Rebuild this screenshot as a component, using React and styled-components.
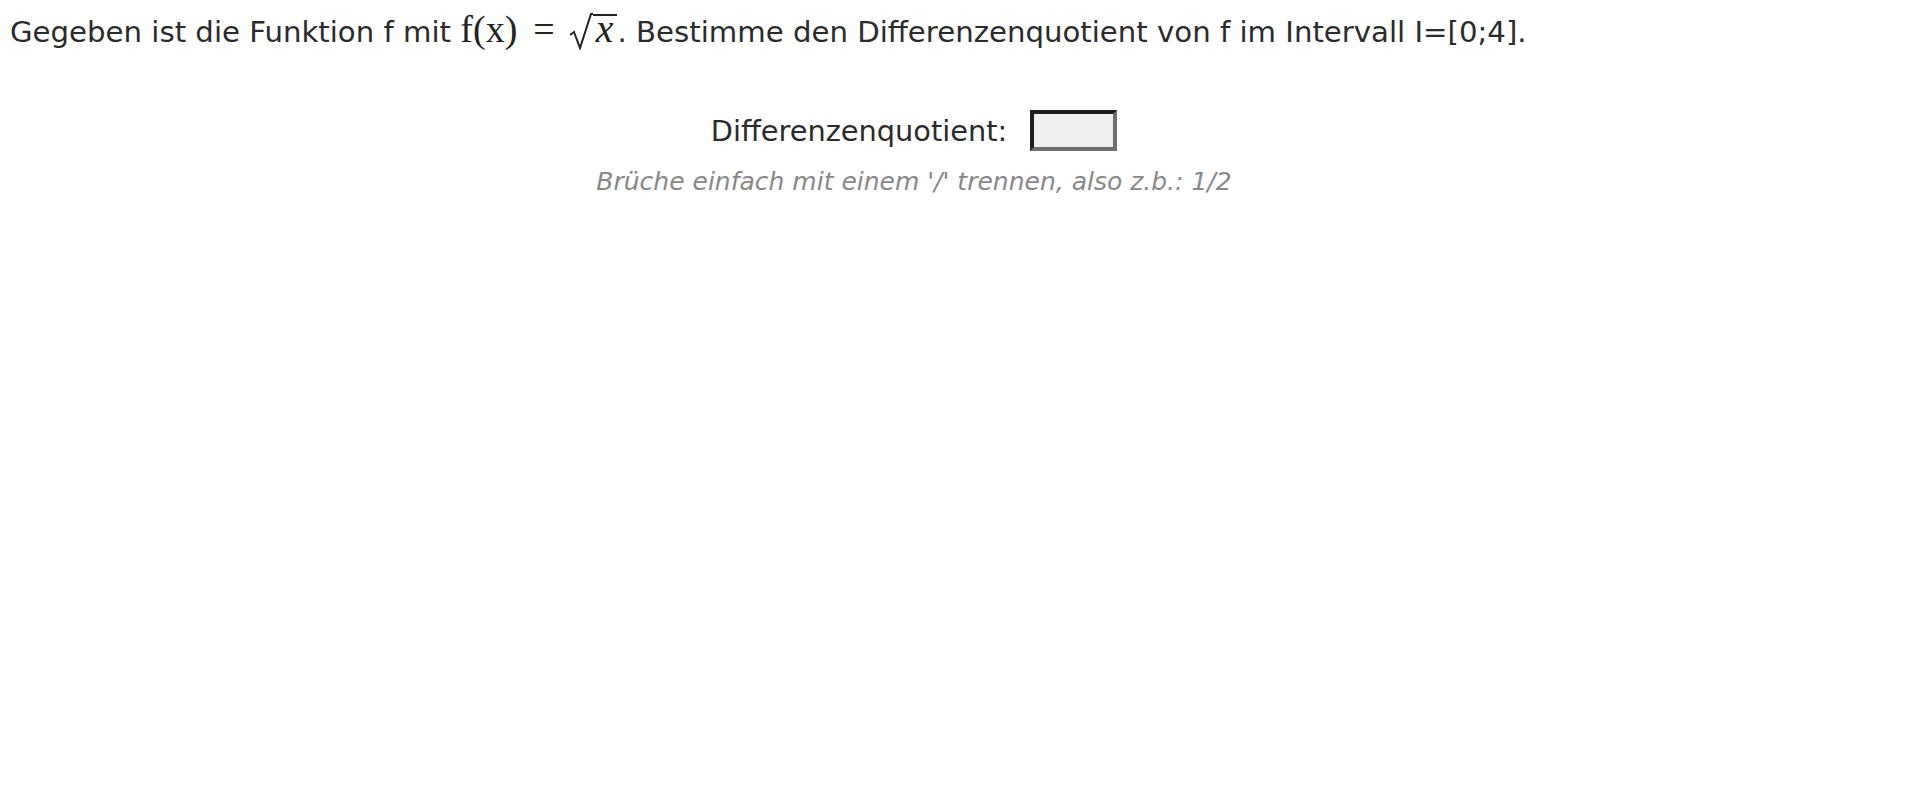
import styled, { createGlobalStyle } from "styled-components";

const GlobalStyle = createGlobalStyle`
  body {
    margin: 0;
    background: #ffffff;
    font-family: "DejaVu Sans", Verdana, sans-serif;
    color: #2b2b2b;
  }
`;

const Page = styled.div`
  padding: 7px 10px;
  font-size: 28.8px;
`;

const Question = styled.p`
  margin: 0;
  height: 50px;
  line-height: 50px;
  font-size: 29.2px;
  white-space: nowrap;
`;

const Math = styled.span`
  font-family: "Liberation Serif", "DejaVu Serif", serif;
  font-size: 38px;
  line-height: 1;
  color: #222;
  margin: 0 1px 0 0;
`;

const Upright = styled.span`
  font-style: normal;
`;

const Var = styled.span`
  font-style: italic;
  font-size: 40px;
`;

const Op = styled.span`
  margin: 0 14px 0 16px;
`;

const Root = styled.span`
  display: inline-flex;
  align-items: flex-end;
  vertical-align: -8px;
`;

const Radicand = styled.span`
  border-top: 2px solid #222;
  padding: 0 3px 8px 3px;
  line-height: 26px;
`;

const AnswerBlock = styled.div`
  width: 1808px;
  display: flex;
  flex-direction: column;
  align-items: center;
  margin-top: 53px;
`;

const Row = styled.label`
  display: flex;
  align-items: center;
  gap: 23px;
`;

const Field = styled.input`
  width: 87px;
  height: 41px;
  box-sizing: border-box;
  background: #eeeeee;
  border-style: solid;
  border-width: 4px;
  border-color: #1e1e1e #6f6f6f #6f6f6f #1e1e1e;
  padding: 0 4px;
  font: inherit;
  outline: none;
`;

const Hint = styled.div`
  margin-top: 16px;
  font-size: 25px;
  font-style: italic;
  color: #888888;
`;

export default function App() {
  return (
    <>
      <GlobalStyle />
      <Page>
        <Question>
          Gegeben ist die Funktion f mit{" "}
          <Math>
            <Upright>f(x)</Upright>
            <Op>=</Op>
            <Root>
              <svg width="24" height="37" viewBox="0 0 24 37">
                <path d="M1 22 L5 19 L11 35 L22 1 L24 1" fill="none" stroke="#222" strokeWidth="2" />
              </svg>
              <Radicand>
                <Var>x</Var>
              </Radicand>
            </Root>
          </Math>
          . Bestimme den Differenzenquotient von f im Intervall I=[0;4].
        </Question>
        <AnswerBlock>
          <Row>
            Differenzenquotient:
            <Field type="text" />
          </Row>
          <Hint>Brüche einfach mit einem '/' trennen, also z.b.: 1/2</Hint>
        </AnswerBlock>
      </Page>
    </>
  );
}
